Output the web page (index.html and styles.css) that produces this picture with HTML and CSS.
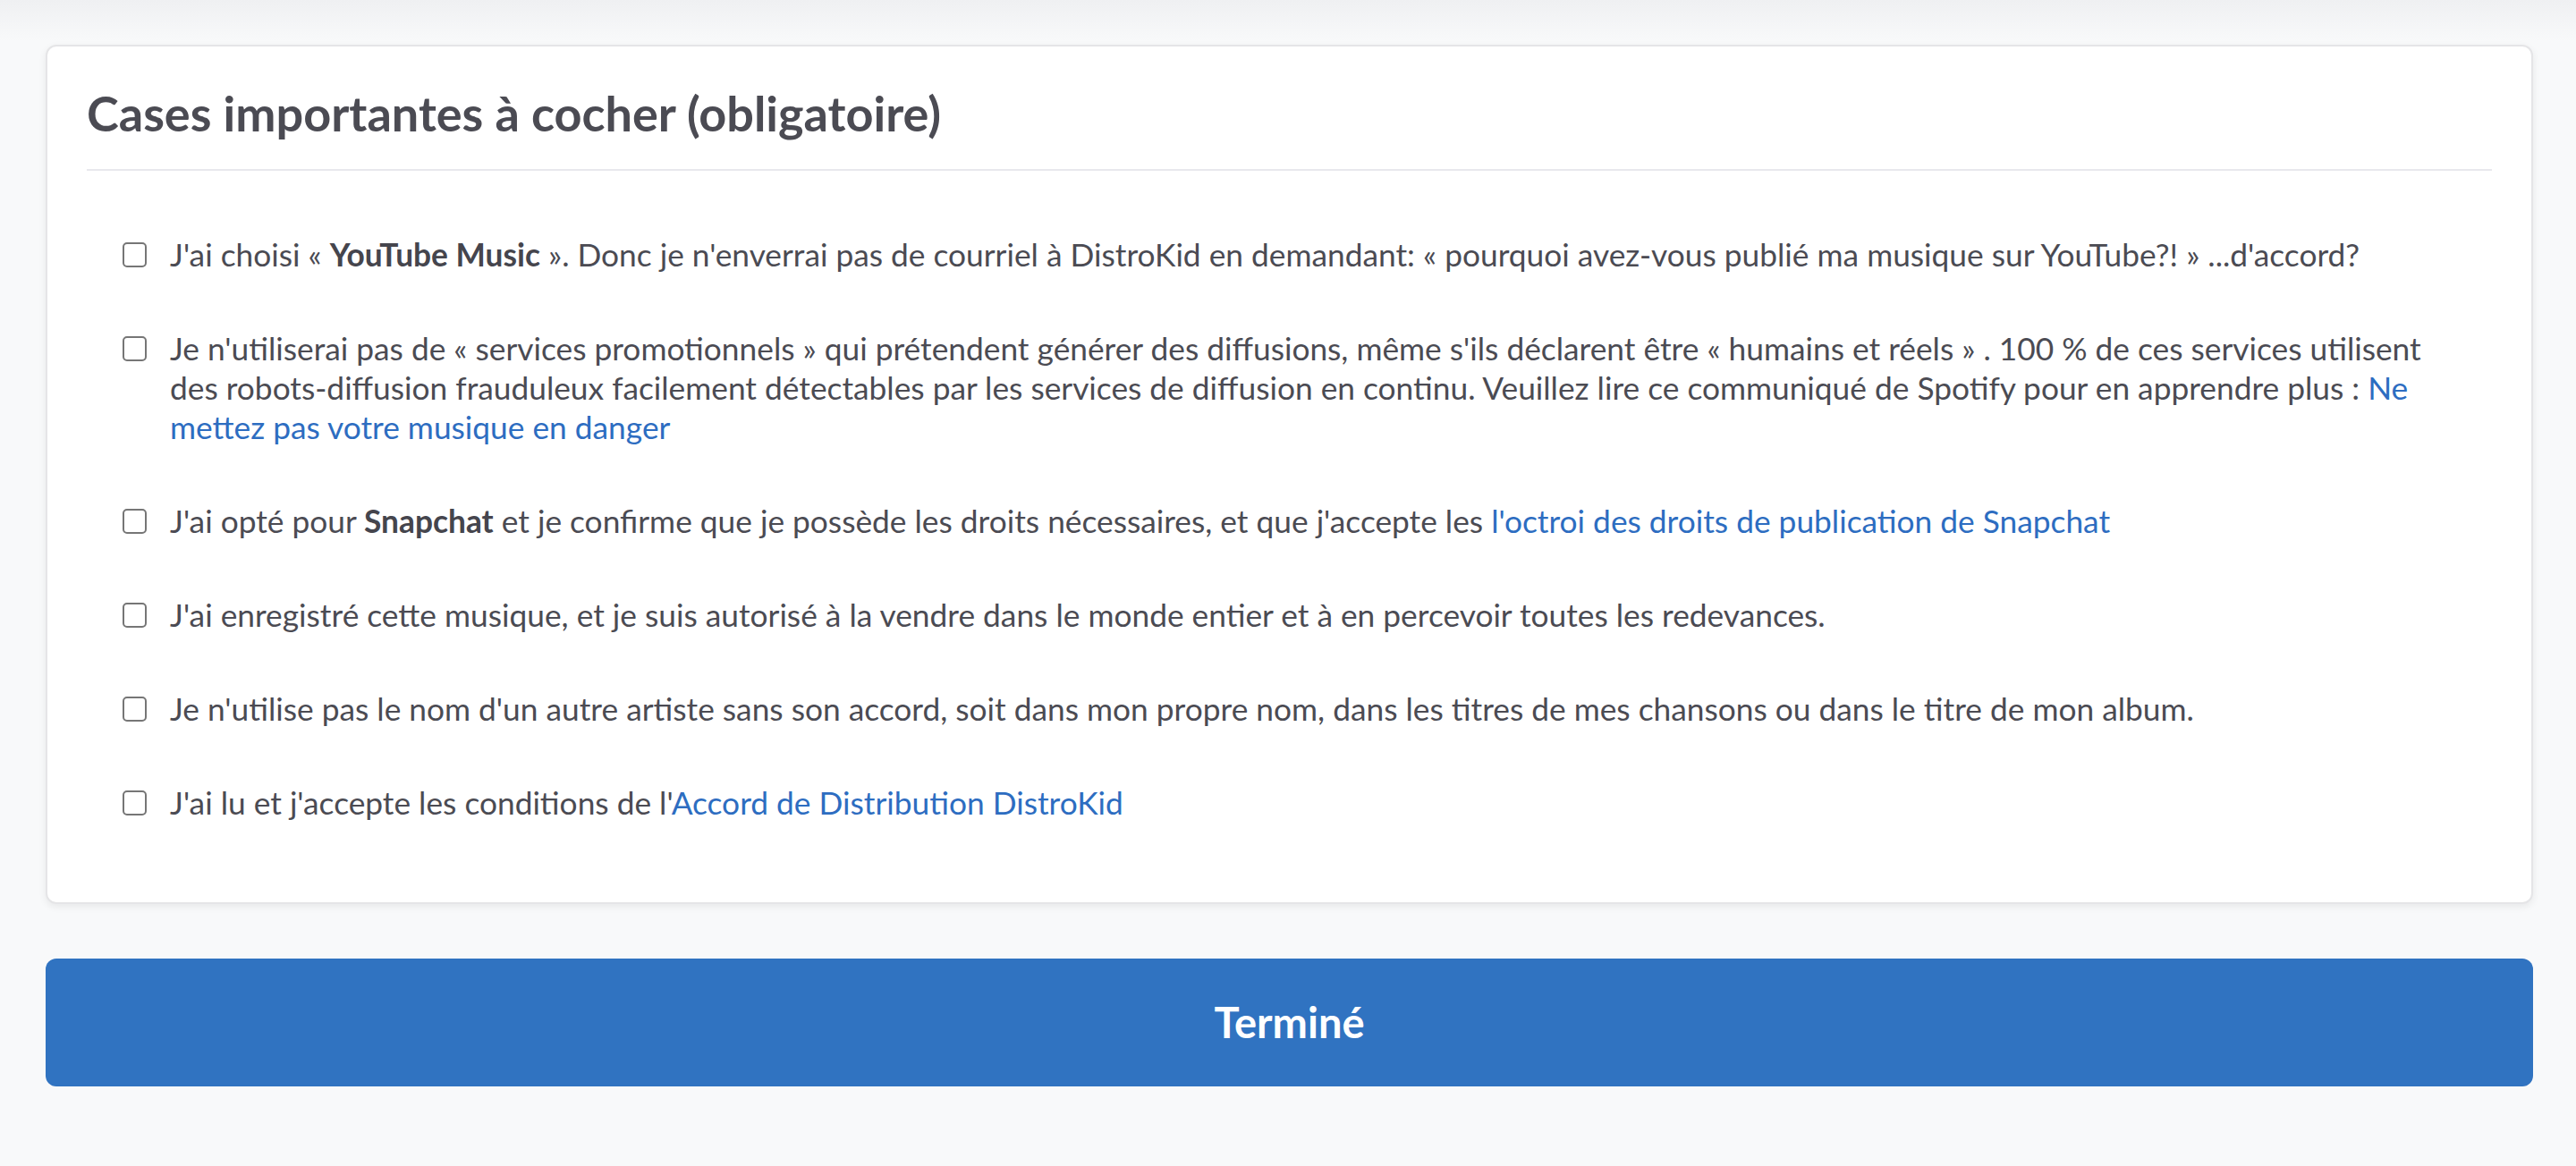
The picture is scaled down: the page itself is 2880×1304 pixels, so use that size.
FILE: index.html
```html
<!DOCTYPE html>
<html lang="fr">
<head>
  <meta charset="UTF-8">
  <meta name="viewport" content="width=device-width, initial-scale=1.0">
  <title>Cases importantes à cocher</title>
  <link rel="stylesheet" href="styles.css">
</head>
<body>
  <main class="page">
    <section class="card">
      <h2 class="card-title">Cases importantes à cocher (obligatoire)</h2>
      <ul class="checks">
        <li>
          <label class="check">
            <input type="checkbox">
            <span>J'ai choisi « <b>YouTube Music</b> ». Donc je n'enverrai pas de courriel à DistroKid en demandant: « pourquoi avez-vous publié ma musique sur YouTube?! » ...d'accord?</span>
          </label>
        </li>
        <li>
          <label class="check">
            <input type="checkbox">
            <span>Je n'utiliserai pas de « services promotionnels » qui prétendent générer des diffusions, même s'ils déclarent être « humains et réels » . 100 % de ces services utilisent des robots-diffusion frauduleux facilement détectables par les services de diffusion en continu. Veuillez lire ce communiqué de Spotify pour en apprendre plus : <a href="#">Ne mettez pas votre musique en danger</a></span>
          </label>
        </li>
        <li>
          <label class="check">
            <input type="checkbox">
            <span>J'ai opté pour <b>Snapchat</b> et je confirme que je possède les droits nécessaires, et que j'accepte les <a href="#">l'octroi des droits de publication de Snapchat</a></span>
          </label>
        </li>
        <li>
          <label class="check">
            <input type="checkbox">
            <span>J'ai enregistré cette musique, et je suis autorisé à la vendre dans le monde entier et à en percevoir toutes les redevances.</span>
          </label>
        </li>
        <li>
          <label class="check">
            <input type="checkbox">
            <span>Je n'utilise pas le nom d'un autre artiste sans son accord, soit dans mon propre nom, dans les titres de mes chansons ou dans le titre de mon album.</span>
          </label>
        </li>
        <li>
          <label class="check">
            <input type="checkbox">
            <span>J'ai lu et j'accepte les conditions de l'<a href="#">Accord de Distribution DistroKid</a></span>
          </label>
        </li>
      </ul>
    </section>

    <button class="done-btn" type="button">Terminé</button>
  </main>
</body>
</html>
```

FILE: styles.css
```css
* { margin: 0; padding: 0; box-sizing: border-box; }
html, body { height: 100%; }
body { font-family: Lato, 'Open Sans', sans-serif; color: #4b4b53; background: #f8f9fa linear-gradient(to bottom, #eff0f2 0, #f8f9fa 46px) no-repeat; }
.page { padding: 50px 48px 0 51px; }

.card { background: #fff; border: 2px solid #e5e5e7; border-radius: 12px; padding: 43px 44px 0 44px; box-shadow: 0 3px 8px rgba(0, 0, 0, 0.07); }
.card-title { font-size: 54px; font-weight: 700; line-height: 1.2; color: #4b4b53; padding-bottom: 29px; border-bottom: 2px solid #e8e8ed; }

.checks { list-style: none; padding: 72px 40px 89px 40px; }
.checks li + li { margin-top: 61px; }
.check { display: flex; align-items: flex-start; gap: 26px; font-size: 35.3px; line-height: 44px; cursor: pointer; }
.check b { font-weight: 700; color: #45454d; }
.check a { color: #2d6dc1; text-decoration: none; }
.check input { appearance: none; -webkit-appearance: none; flex: 0 0 27px; width: 27px; height: 28px; margin-top: 8px; border: 2px solid #767676; border-radius: 5px; background: #fff; }

.done-btn { display: block; width: 100%; height: 143px; margin-top: 61px; border: none; border-radius: 12px; background: #3073c1; color: #fff; font-family: Lato, 'Open Sans', sans-serif; font-size: 47px; font-weight: 700; cursor: pointer; }
```
